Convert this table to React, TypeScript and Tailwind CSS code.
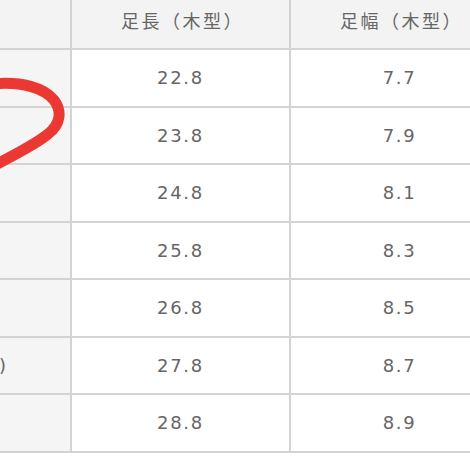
import React from "react";

const rows: { left: string; len: string; wid: string }[] = [
  { left: "", len: "22.8", wid: "7.7" },
  { left: "", len: "23.8", wid: "7.9" },
  { left: "", len: "24.8", wid: "8.1" },
  { left: "", len: "25.8", wid: "8.3" },
  { left: "", len: "26.8", wid: "8.5" },
  { left: "27.5(E)", len: "27.8", wid: "8.7" },
  { left: "", len: "28.8", wid: "8.9" },
];

const font = { fontFamily: '"DejaVu Sans","Noto Sans CJK JP",sans-serif' };

export default function App() {
  return (
    <div className="relative w-[470px] h-[470px] overflow-hidden bg-white" style={font}>
      <div className="ml-[-150px] w-[700px]">
        <div className="grid grid-cols-[222px_219px_259px] h-[50px] bg-[#f3f3f3] text-[#666666] text-[18px] tracking-[2.5px]">
          <div className="border-r-2 border-b-2 border-[#d3d3d3]" />
          <div className="flex items-center justify-center pb-[6px] pl-[4px] border-r-2 border-b-2 border-[#d3d3d3]">
            足長（木型）
          </div>
          <div className="flex items-center justify-center pb-[6px] pr-[38px] border-b-2 border-[#d3d3d3]">
            足幅（木型）
          </div>
        </div>
        {rows.map((r, i) => (
          <div
            key={i}
            className="grid grid-cols-[222px_219px_259px] h-[57.5px] text-[#666666] text-[18px] tracking-[1.7px]"
          >
            <div className="flex items-center justify-end pr-[64px] bg-[#f5f5f5] border-r-2 border-b-2 border-[#d3d3d3] tracking-normal">
              {r.left}
            </div>
            <div className="flex items-center justify-center bg-white border-r-2 border-b-2 border-[#d3d3d3]">
              {r.len}
            </div>
            <div className="flex items-center justify-center pr-[42px] bg-white border-b-2 border-[#d3d3d3]">
              {r.wid}
            </div>
          </div>
        ))}
      </div>
      <svg
        className="absolute left-0 top-0 pointer-events-none"
        width="470"
        height="470"
        viewBox="0 0 470 470"
      >
        <path
          d="M -8 84 C 22 81, 44 88, 54 100 C 62 111, 61 124, 48 134 C 35 145, 15 154, -8 167"
          fill="none"
          stroke="#ec3832"
          strokeWidth="11"
          strokeLinecap="round"
          strokeLinejoin="round"
        />
      </svg>
    </div>
  );
}
